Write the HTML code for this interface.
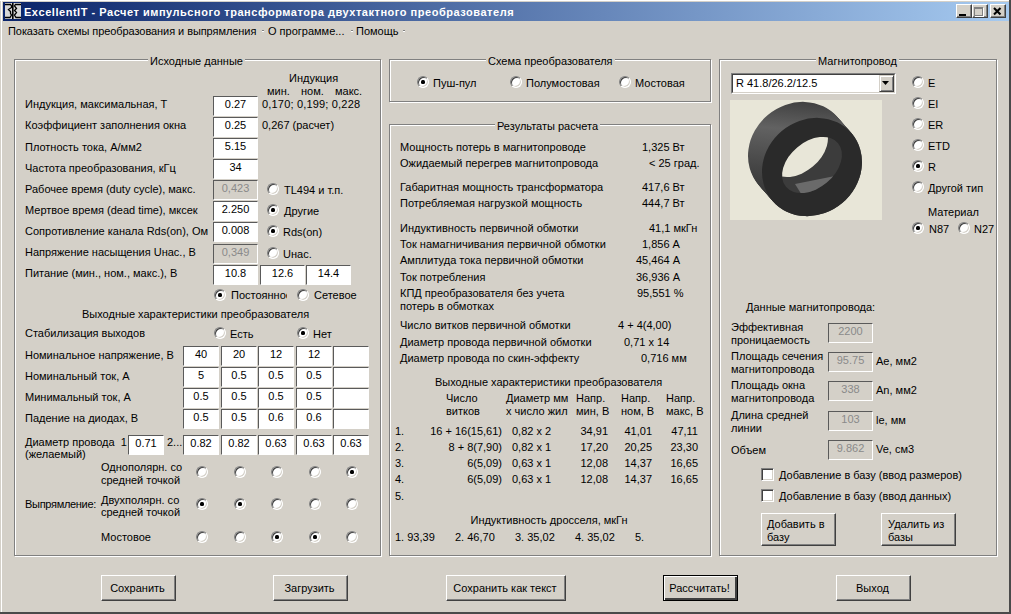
<!DOCTYPE html>
<html><head><meta charset="utf-8"><style>
html,body{margin:0;padding:0;width:1011px;height:614px;overflow:hidden;background:#d4d0c8;position:relative}
body{font-family:"Liberation Sans",sans-serif;font-size:11px;color:#000}
.t{position:absolute;white-space:pre;font-size:11px;line-height:13px}
#frame{position:absolute;left:0;top:0;width:1011px;height:614px}
#title{position:absolute;left:3px;top:2px;width:1006px;height:19px;background:linear-gradient(to right,#0a246a,#a6caf0)}
.icon{position:absolute;left:5px;top:3px}
.ttl{color:#fff;font-weight:bold;font-size:11px;letter-spacing:0.53px}
.cap{position:absolute;width:14px;height:12px;background:#d4d0c8;border-top:1px solid #fff;border-left:1px solid #fff;border-right:1px solid #404040;border-bottom:1px solid #404040;box-shadow:inset -1px -1px #808080}
.cap .mn{position:absolute;left:2px;top:9px;width:7px;height:2px;background:#000}
.cap .mx{position:absolute;left:1px;top:2px;width:7px;height:6px;border:1px solid #808080;border-top-width:2px;box-shadow:1px 1px #fff}
.sep{color:#808080}
.gd{position:absolute;border:1px solid #808080}
.gw{position:absolute;border:1px solid #fff}
.gt{background:#d4d0c8;padding:0 2px}
.box{position:absolute;box-sizing:border-box;background:#fff;padding-top:1px;border-top:1px solid #5a5a5a;border-left:1px solid #5a5a5a;border-right:1px solid #fff;border-bottom:1px solid #fff;font-size:11px;white-space:pre}
.box.dis{background:#d4d0c8;color:#8a8a8a}
.rd{position:absolute;box-sizing:border-box;width:12px;height:12px;border-radius:50%;background:#fff;border:1px solid;border-color:#808080 #fff #fff #808080;box-shadow:inset 1px 1px #404040,inset -1px -1px #d4d0c8}
.rd i{position:absolute;left:3px;top:3px;width:4px;height:4px;background:#000;border-radius:1.5px}
.cb{position:absolute;box-sizing:border-box;width:13px;height:13px;background:#fff;border:1px solid;border-color:#808080 #fff #fff #808080;box-shadow:inset 1px 1px #404040,inset -1px -1px #d4d0c8}
.btn{position:absolute;box-sizing:border-box;background:#d4d0c8;border-top:1px solid #fff;border-left:1px solid #fff;border-right:1px solid #404040;border-bottom:1px solid #404040;box-shadow:inset -1px -1px #808080}
.btn.def{border:1px solid #000;box-shadow:inset 1px 1px #fff,inset -2px -2px #404040}
.combo{position:absolute;box-sizing:border-box;background:#fff;border-top:1px solid #808080;border-left:1px solid #808080;border-right:1px solid #fff;border-bottom:1px solid #fff}
.ci{position:absolute;left:0;top:0;right:0;bottom:0;border-top:1px solid #404040;border-left:1px solid #404040;border-right:1px solid #d4d0c8;border-bottom:1px solid #d4d0c8}
.ct{position:absolute;left:3px;top:2px;line-height:13px;white-space:pre}
.cbtn{position:absolute;right:0px;top:0px;width:13px;height:15px;background:#d4d0c8;border-top:1px solid #d4d0c8;border-left:1px solid #d4d0c8;border-right:1px solid #404040;border-bottom:1px solid #404040;box-shadow:inset 1px 1px #fff,inset -1px -1px #808080}
.img{position:absolute}
#rb{position:absolute;left:1009px;top:0;width:2px;height:614px;background:#4a4a4a}
#bb{position:absolute;left:0;top:612px;width:1011px;height:2px;background:#4a4a4a}
#lb{position:absolute;left:1px;top:0;width:1px;height:612px;background:#fff}
#tb{position:absolute;left:0;top:0;width:1009px;height:1px;background:#fff}
</style></head><body>
<div id="lb"></div><div id="tb"></div><div id="rb"></div><div id="bb"></div>
<div id="title"></div>
<svg class="icon" width="16" height="16" viewBox="0 0 16 16"><rect width="16" height="16" fill="#d8d8d8"/><g fill="none" stroke="#000" stroke-width="1.3"><path d="M0 1.5H5.5L6.5 3V4.5L3.5 6.5L5.5 8.5V10.5L6.5 12L5 14.5H0"/><path d="M16 1.5H10.5L9.5 3L11.5 5.5L9.5 7.5L11.5 9.5L9.5 12L11 14.5H16"/></g><rect x="7" y="0" width="1.6" height="16" fill="#000"/></svg>
<div class="t ttl" style="left:24px;top:6px">ExcellentIT - Расчет импульсного трансформатора двухтактного преобразователя</div>
<div class="cap" style="left:956px;top:4px"><i class="mn"></i></div>
<div class="cap" style="left:972px;top:4px"><i class="mx"></i></div>
<div class="cap" style="left:990px;top:4px"><svg width="16" height="14" style="position:absolute;left:-1px;top:-1px"><path d="M4 4 L10.5 10.5 M10.5 4 L4 10.5" stroke="#000" stroke-width="2.1"/></svg></div>
<div class="t " style="left:8px;top:25px;letter-spacing:-0.07px">Показать схемы преобразования и выпрямления</div>
<div style="position:absolute;left:262px;top:30px;width:2px;height:1px;background:#808080;box-shadow:0 1px #fff"></div>
<div style="position:absolute;left:351px;top:30px;width:2px;height:1px;background:#808080;box-shadow:0 1px #fff"></div>
<div style="position:absolute;left:403px;top:30px;width:2px;height:1px;background:#808080;box-shadow:0 1px #fff"></div>
<div class="t " style="left:268px;top:25px;">О программе...</div>
<div class="t " style="left:356px;top:25px;">Помощь</div>
<div class="gw" style="left:15px;top:60px;width:365px;height:495px"></div>
<div class="gd" style="left:14px;top:59px;width:365px;height:495px"></div>
<div class="t gt" style="left:148px;top:55px">Исходные данные</div>
<div class="t " style="left:289px;top:72px;">Индукция</div>
<div class="t " style="left:267px;top:85px;">мин.</div>
<div class="t " style="left:301px;top:85px;">ном.</div>
<div class="t " style="left:335px;top:85px;">макс.</div>
<div class="t " style="left:25px;top:98px;">Индукция, максимальная, Т</div>
<div class="box" style="left:213px;top:96px;width:45px;height:20px;line-height:13px;text-align:center">0.27</div>
<div class="t " style="left:25px;top:119px;">Коэффициент заполнения окна</div>
<div class="box" style="left:213px;top:117px;width:45px;height:20px;line-height:13px;text-align:center">0.25</div>
<div class="t " style="left:25px;top:141px;">Плотность тока, А/мм2</div>
<div class="box" style="left:213px;top:138px;width:45px;height:20px;line-height:13px;text-align:center">5.15</div>
<div class="t " style="left:25px;top:162px;">Частота преобразования, кГц</div>
<div class="box" style="left:213px;top:159px;width:45px;height:20px;line-height:13px;text-align:center">34</div>
<div class="t " style="left:25px;top:183px;">Рабочее время (duty cycle), макс.</div>
<div class="box dis" style="left:213px;top:180px;width:45px;height:20px;line-height:13px;text-align:center">0,423</div>
<div class="t " style="left:25px;top:204px;">Мертвое время (dead time), мксек</div>
<div class="box" style="left:213px;top:201px;width:45px;height:20px;line-height:13px;text-align:center">2.250</div>
<div class="t " style="left:25px;top:225px;">Сопротивление канала Rds(on), Ом</div>
<div class="box" style="left:213px;top:222px;width:45px;height:20px;line-height:13px;text-align:center">0.008</div>
<div class="t " style="left:25px;top:246px;">Напряжение насыщения Uнас., В</div>
<div class="box dis" style="left:213px;top:244px;width:45px;height:20px;line-height:13px;text-align:center">0,349</div>
<div class="t " style="left:25px;top:267px;">Питание (мин., ном., макс.), В</div>
<div class="box" style="left:213px;top:265px;width:45px;height:20px;line-height:13px;text-align:center">10.8</div>
<div class="box" style="left:260px;top:265px;width:45px;height:20px;line-height:13px;text-align:center">12.6</div>
<div class="box" style="left:306px;top:265px;width:45px;height:20px;line-height:13px;text-align:center">14.4</div>
<div class="t " style="left:262px;top:98px;letter-spacing:0.18px">0,170; 0,199; 0,228</div>
<div class="t " style="left:262px;top:119px;">0,267 (расчет)</div>
<div class="rd" style="left:267px;top:183px"></div>
<div class="t " style="left:284px;top:184px;">TL494 и т.п.</div>
<div class="rd" style="left:267px;top:204px"><i></i></div>
<div class="t " style="left:284px;top:205px;">Другие</div>
<div class="rd" style="left:267px;top:225px"><i></i></div>
<div class="t " style="left:283px;top:226px;">Rds(on)</div>
<div class="rd" style="left:267px;top:247px"></div>
<div class="t " style="left:283px;top:248px;">Uнас.</div>
<div class="rd" style="left:214px;top:289px"><i></i></div>
<div class="t" style="left:231px;top:289px;width:56px;overflow:hidden">Постоянное</div>
<div class="rd" style="left:297px;top:289px"></div>
<div class="t " style="left:314px;top:289px;">Сетевое</div>
<div class="t " style="left:82px;top:308px;">Выходные характеристики преобразователя</div>
<div class="t " style="left:25px;top:327px;">Стабилизация выходов</div>
<div class="rd" style="left:214px;top:327px"></div>
<div class="t " style="left:230px;top:328px;">Есть</div>
<div class="rd" style="left:297px;top:327px"><i></i></div>
<div class="t " style="left:313px;top:328px;">Нет</div>
<div class="t " style="left:25px;top:349px;">Номинальное напряжение, В</div>
<div class="box" style="left:183px;top:346px;width:36px;height:20px;line-height:13px;text-align:center">40</div>
<div class="box" style="left:221px;top:346px;width:36px;height:20px;line-height:13px;text-align:center">20</div>
<div class="box" style="left:258px;top:346px;width:36px;height:20px;line-height:13px;text-align:center">12</div>
<div class="box" style="left:296px;top:346px;width:36px;height:20px;line-height:13px;text-align:center">12</div>
<div class="box" style="left:333px;top:346px;width:36px;height:20px;line-height:13px;text-align:center"></div>
<div class="t " style="left:25px;top:370px;">Номинальный ток, А</div>
<div class="box" style="left:183px;top:367px;width:36px;height:20px;line-height:13px;text-align:center">5</div>
<div class="box" style="left:221px;top:367px;width:36px;height:20px;line-height:13px;text-align:center">0.5</div>
<div class="box" style="left:258px;top:367px;width:36px;height:20px;line-height:13px;text-align:center">0.5</div>
<div class="box" style="left:296px;top:367px;width:36px;height:20px;line-height:13px;text-align:center">0.5</div>
<div class="box" style="left:333px;top:367px;width:36px;height:20px;line-height:13px;text-align:center"></div>
<div class="t " style="left:25px;top:391px;">Минимальный ток, А</div>
<div class="box" style="left:183px;top:388px;width:36px;height:20px;line-height:13px;text-align:center">0.5</div>
<div class="box" style="left:221px;top:388px;width:36px;height:20px;line-height:13px;text-align:center">0.5</div>
<div class="box" style="left:258px;top:388px;width:36px;height:20px;line-height:13px;text-align:center">0.5</div>
<div class="box" style="left:296px;top:388px;width:36px;height:20px;line-height:13px;text-align:center">0.5</div>
<div class="box" style="left:333px;top:388px;width:36px;height:20px;line-height:13px;text-align:center"></div>
<div class="t " style="left:25px;top:412px;">Падение на диодах, В</div>
<div class="box" style="left:183px;top:409px;width:36px;height:20px;line-height:13px;text-align:center">0.5</div>
<div class="box" style="left:221px;top:409px;width:36px;height:20px;line-height:13px;text-align:center">0.5</div>
<div class="box" style="left:258px;top:409px;width:36px;height:20px;line-height:13px;text-align:center">0.6</div>
<div class="box" style="left:296px;top:409px;width:36px;height:20px;line-height:13px;text-align:center">0.6</div>
<div class="box" style="left:333px;top:409px;width:36px;height:20px;line-height:13px;text-align:center"></div>
<div class="t " style="left:25px;top:436px;">Диаметр провода&nbsp; 1</div>
<div class="t " style="left:25px;top:448px;">(желаемый)</div>
<div class="box" style="left:128px;top:435px;width:36px;height:20px;line-height:13px;text-align:center">0.71</div>
<div class="t " style="left:167px;top:436px;">2...</div>
<div class="box" style="left:183px;top:435px;width:36px;height:20px;line-height:13px;text-align:center">0.82</div>
<div class="box" style="left:221px;top:435px;width:36px;height:20px;line-height:13px;text-align:center">0.82</div>
<div class="box" style="left:258px;top:435px;width:36px;height:20px;line-height:13px;text-align:center">0.63</div>
<div class="box" style="left:296px;top:435px;width:36px;height:20px;line-height:13px;text-align:center">0.63</div>
<div class="box" style="left:333px;top:435px;width:36px;height:20px;line-height:13px;text-align:center">0.63</div>
<div class="t " style="left:101px;top:461px;">Однополярн. со</div>
<div class="t " style="left:101px;top:474px;">средней точкой</div>
<div class="t " style="left:101px;top:494px;">Двухполярн. со</div>
<div class="t " style="left:101px;top:506px;">средней точкой</div>
<div class="t " style="left:25px;top:498px;letter-spacing:-0.3px">Выпрямление:</div>
<div class="t " style="left:101px;top:531px;">Мостовое</div>
<div class="rd" style="left:196px;top:466px"></div>
<div class="rd" style="left:234px;top:466px"></div>
<div class="rd" style="left:271px;top:466px"></div>
<div class="rd" style="left:309px;top:466px"></div>
<div class="rd" style="left:346px;top:466px"><i></i></div>
<div class="rd" style="left:196px;top:498px"><i></i></div>
<div class="rd" style="left:234px;top:498px"><i></i></div>
<div class="rd" style="left:271px;top:498px"></div>
<div class="rd" style="left:309px;top:498px"></div>
<div class="rd" style="left:346px;top:498px"></div>
<div class="rd" style="left:196px;top:531px"></div>
<div class="rd" style="left:234px;top:531px"></div>
<div class="rd" style="left:271px;top:531px"><i></i></div>
<div class="rd" style="left:309px;top:531px"><i></i></div>
<div class="rd" style="left:346px;top:531px"></div>
<div class="gw" style="left:390px;top:60px;width:320px;height:41px"></div>
<div class="gd" style="left:389px;top:59px;width:320px;height:41px"></div>
<div class="t gt" style="left:486px;top:55px">Схема преобразователя</div>
<div class="rd" style="left:417px;top:76px"><i></i></div>
<div class="t " style="left:433px;top:77px;">Пуш-пул</div>
<div class="rd" style="left:510px;top:76px"></div>
<div class="t " style="left:526px;top:77px;">Полумостовая</div>
<div class="rd" style="left:619px;top:76px"></div>
<div class="t " style="left:635px;top:77px;">Мостовая</div>
<div class="gw" style="left:390px;top:125px;width:320px;height:430px"></div>
<div class="gd" style="left:389px;top:124px;width:320px;height:430px"></div>
<div class="t gt" style="left:495px;top:120px">Результаты расчета</div>
<div class="t " style="left:400px;top:141px;">Мощность потерь в магнитопроводе</div>
<div class="t " style="left:642px;top:141px;">1,325 Вт</div>
<div class="t " style="left:400px;top:157px;">Ожидаемый перегрев магнитопровода</div>
<div class="t " style="left:649px;top:157px;">&lt; 25 град.</div>
<div class="t " style="left:400px;top:181px;">Габаритная мощность трансформатора</div>
<div class="t " style="left:642px;top:181px;">417,6 Вт</div>
<div class="t " style="left:400px;top:197px;">Потребляемая нагрузкой мощность</div>
<div class="t " style="left:642px;top:197px;">444,7 Вт</div>
<div class="t " style="left:400px;top:222px;">Индуктивность первичной обмотки</div>
<div class="t " style="left:649px;top:222px;">41,1 мкГн</div>
<div class="t " style="left:400px;top:238px;">Ток намагничивания первичной обмотки</div>
<div class="t " style="left:642px;top:238px;">1,856 А</div>
<div class="t " style="left:400px;top:254px;">Амплитуда тока первичной обмотки</div>
<div class="t " style="left:636px;top:254px;">45,464 А</div>
<div class="t " style="left:400px;top:271px;">Ток потребления</div>
<div class="t " style="left:636px;top:271px;">36,936 А</div>
<div class="t " style="left:400px;top:287px;">КПД преобразователя без учета</div>
<div class="t " style="left:637px;top:287px;">95,551 %</div>
<div class="t " style="left:400px;top:319px;">Число витков первичной обмотки</div>
<div class="t " style="left:618px;top:319px;">4 + 4(4,00)</div>
<div class="t " style="left:400px;top:336px;">Диаметр провода первичной обмотки</div>
<div class="t " style="left:624px;top:336px;">0,71 x 14</div>
<div class="t " style="left:400px;top:352px;">Диаметр провода по скин-эффекту</div>
<div class="t " style="left:641px;top:352px;">0,716 мм</div>
<div class="t " style="left:400px;top:300px;">потерь в обмотках</div>
<div class="t " style="left:435px;top:376px;">Выходные характеристики преобразователя</div>
<div class="t " style="left:446px;top:392px;">Число</div>
<div class="t " style="left:446px;top:405px;">витков</div>
<div class="t " style="left:506px;top:392px;">Диаметр мм</div>
<div class="t " style="left:506px;top:405px;">х число жил</div>
<div class="t " style="left:576px;top:392px;">Напр.</div>
<div class="t " style="left:576px;top:405px;">мин, В</div>
<div class="t " style="left:621px;top:392px;">Напр.</div>
<div class="t " style="left:621px;top:405px;">ном, В</div>
<div class="t " style="left:666px;top:392px;">Напр.</div>
<div class="t " style="left:666px;top:405px;">макс, В</div>
<div class="t " style="left:395px;top:425px;">1.</div>
<div class="t " style="left:302px;width:200px;text-align:right;top:425px;">16 + 16(15,61)</div>
<div class="t " style="left:512px;top:425px;">0,82 x 2</div>
<div class="t " style="left:408px;width:200px;text-align:right;top:425px;">34,91</div>
<div class="t " style="left:452px;width:200px;text-align:right;top:425px;">41,01</div>
<div class="t " style="left:498px;width:200px;text-align:right;top:425px;">47,11</div>
<div class="t " style="left:395px;top:441px;">2.</div>
<div class="t " style="left:302px;width:200px;text-align:right;top:441px;">8 + 8(7,90)</div>
<div class="t " style="left:512px;top:441px;">0,82 x 1</div>
<div class="t " style="left:408px;width:200px;text-align:right;top:441px;">17,20</div>
<div class="t " style="left:452px;width:200px;text-align:right;top:441px;">20,25</div>
<div class="t " style="left:498px;width:200px;text-align:right;top:441px;">23,30</div>
<div class="t " style="left:395px;top:457px;">3.</div>
<div class="t " style="left:302px;width:200px;text-align:right;top:457px;">6(5,09)</div>
<div class="t " style="left:512px;top:457px;">0,63 x 1</div>
<div class="t " style="left:408px;width:200px;text-align:right;top:457px;">12,08</div>
<div class="t " style="left:452px;width:200px;text-align:right;top:457px;">14,37</div>
<div class="t " style="left:498px;width:200px;text-align:right;top:457px;">16,65</div>
<div class="t " style="left:395px;top:473px;">4.</div>
<div class="t " style="left:302px;width:200px;text-align:right;top:473px;">6(5,09)</div>
<div class="t " style="left:512px;top:473px;">0,63 x 1</div>
<div class="t " style="left:408px;width:200px;text-align:right;top:473px;">12,08</div>
<div class="t " style="left:452px;width:200px;text-align:right;top:473px;">14,37</div>
<div class="t " style="left:498px;width:200px;text-align:right;top:473px;">16,65</div>
<div class="t " style="left:395px;top:490px;">5.</div>
<div class="t " style="left:449px;width:200px;text-align:center;top:514px;">Индуктивность дросселя, мкГн</div>
<div class="t " style="left:395px;top:531px;">1. 93,39</div>
<div class="t " style="left:455px;top:531px;">2. 46,70</div>
<div class="t " style="left:515px;top:531px;">3. 35,02</div>
<div class="t " style="left:575px;top:531px;">4. 35,02</div>
<div class="t " style="left:635px;top:531px;">5.</div>
<div class="gw" style="left:720px;top:60px;width:276px;height:495px"></div>
<div class="gd" style="left:719px;top:59px;width:276px;height:495px"></div>
<div class="t gt" style="left:816px;top:55px">Магнитопровод</div>
<div class="combo" style="left:731px;top:73px;width:165px;height:21px"><div class="ci"><div class="ct">R 41.8/26.2/12.5</div><div class="cbtn"><svg width="7" height="4" style="position:absolute;left:2px;top:5px"><path d="M0 0H7L3.5 4Z" fill="#000"/></svg></div></div></div>
<svg class="img" style="left:730px;top:100px" width="152" height="120" viewBox="730 100 152 120">
<defs>
<linearGradient id="wall" gradientUnits="userSpaceOnUse" x1="755" y1="190" x2="845" y2="100"><stop offset="0" stop-color="#303030"/><stop offset="0.3" stop-color="#454545"/><stop offset="0.62" stop-color="#626262"/><stop offset="0.85" stop-color="#404040"/><stop offset="1" stop-color="#2c2c2c"/></linearGradient>
<clipPath id="hole"><ellipse cx="812" cy="165" rx="34" ry="23" transform="rotate(-40 812 165)"/></clipPath>
</defs>
<rect x="730" y="100" width="152" height="120" fill="#e8e6d8"/>
<ellipse cx="812.00" cy="167.00" rx="52" ry="47" transform="rotate(-40 812.00 167.00)" fill="url(#wall)"/><ellipse cx="810.83" cy="165.67" rx="52" ry="47" transform="rotate(-40 810.83 165.67)" fill="url(#wall)"/><ellipse cx="809.67" cy="164.33" rx="52" ry="47" transform="rotate(-40 809.67 164.33)" fill="url(#wall)"/><ellipse cx="808.50" cy="163.00" rx="52" ry="47" transform="rotate(-40 808.50 163.00)" fill="url(#wall)"/><ellipse cx="807.33" cy="161.67" rx="52" ry="47" transform="rotate(-40 807.33 161.67)" fill="url(#wall)"/><ellipse cx="806.17" cy="160.33" rx="52" ry="47" transform="rotate(-40 806.17 160.33)" fill="url(#wall)"/><ellipse cx="805.00" cy="159.00" rx="52" ry="47" transform="rotate(-40 805.00 159.00)" fill="url(#wall)"/><ellipse cx="803.83" cy="157.67" rx="52" ry="47" transform="rotate(-40 803.83 157.67)" fill="url(#wall)"/><ellipse cx="802.67" cy="156.33" rx="52" ry="47" transform="rotate(-40 802.67 156.33)" fill="url(#wall)"/><ellipse cx="801.50" cy="155.00" rx="52" ry="47" transform="rotate(-40 801.50 155.00)" fill="url(#wall)"/><ellipse cx="800.33" cy="153.67" rx="52" ry="47" transform="rotate(-40 800.33 153.67)" fill="url(#wall)"/><ellipse cx="799.17" cy="152.33" rx="52" ry="47" transform="rotate(-40 799.17 152.33)" fill="url(#wall)"/><ellipse cx="798.00" cy="151.00" rx="52" ry="47" transform="rotate(-40 798.00 151.00)" fill="url(#wall)"/>
<ellipse cx="812" cy="167" rx="52" ry="47" transform="rotate(-40 812 167)" fill="#2a2a2a"/>
<ellipse cx="812" cy="165" rx="34" ry="23" transform="rotate(-40 812 165)" fill="#3c3c3c"/>
<g clip-path="url(#hole)"><ellipse cx="798" cy="149" rx="34" ry="23" transform="rotate(-40 798 149)" fill="#e8e6d8"/>
<path d="M795 184 L835 176 L848 186 L805 200Z" fill="#6a6a6a"/></g>
</svg>
<div class="rd" style="left:912px;top:76px"></div>
<div class="t " style="left:928px;top:77px;">E</div>
<div class="rd" style="left:912px;top:97px"></div>
<div class="t " style="left:928px;top:98px;">EI</div>
<div class="rd" style="left:912px;top:118px"></div>
<div class="t " style="left:928px;top:119px;">ER</div>
<div class="rd" style="left:912px;top:139px"></div>
<div class="t " style="left:928px;top:140px;">ETD</div>
<div class="rd" style="left:912px;top:160px"><i></i></div>
<div class="t " style="left:928px;top:161px;">R</div>
<div class="rd" style="left:912px;top:181px"></div>
<div class="t " style="left:928px;top:182px;">Другой тип</div>
<div class="t " style="left:928px;top:206px;">Материал</div>
<div class="rd" style="left:912px;top:222px"><i></i></div>
<div class="t " style="left:929px;top:223px;">N87</div>
<div class="rd" style="left:958px;top:222px"></div>
<div class="t " style="left:974px;top:223px;">N27</div>
<div class="t " style="left:746px;top:301px;">Данные магнитопровода:</div>
<div class="box dis" style="left:828px;top:323px;width:45px;height:20px;line-height:13px;text-align:center">2200</div>
<div class="t " style="left:731px;top:321px;">Эффективная</div>
<div class="t " style="left:731px;top:334px;">проницаемость</div>
<div class="box dis" style="left:828px;top:352px;width:45px;height:20px;line-height:13px;text-align:center">95.75</div>
<div class="t " style="left:731px;top:350px;">Площадь сечения</div>
<div class="t " style="left:731px;top:363px;">магнитопровода</div>
<div class="t " style="left:876px;top:355px;">Ae, мм2</div>
<div class="box dis" style="left:828px;top:381px;width:45px;height:20px;line-height:13px;text-align:center">338</div>
<div class="t " style="left:731px;top:379px;">Площадь окна</div>
<div class="t " style="left:731px;top:392px;">магнитопровода</div>
<div class="t " style="left:876px;top:384px;">An, мм2</div>
<div class="box dis" style="left:828px;top:411px;width:45px;height:20px;line-height:13px;text-align:center">103</div>
<div class="t " style="left:731px;top:409px;">Длина средней</div>
<div class="t " style="left:731px;top:422px;">линии</div>
<div class="t " style="left:876px;top:414px;">le, мм</div>
<div class="box dis" style="left:828px;top:440px;width:45px;height:20px;line-height:13px;text-align:center">9.862</div>
<div class="t " style="left:876px;top:443px;">Ve, см3</div>
<div class="t " style="left:731px;top:444px;">Объем</div>
<div class="cb" style="left:761px;top:468px"></div>
<div class="t " style="left:779px;top:469px;">Добавление в базу (ввод размеров)</div>
<div class="cb" style="left:761px;top:489px"></div>
<div class="t " style="left:779px;top:490px;">Добавление в базу (ввод данных)</div>
<div class="btn" style="left:761px;top:513px;width:75px;height:33px"></div>
<div class="t " style="left:767px;top:518px;">Добавить в</div>
<div class="t " style="left:767px;top:531px;">базу</div>
<div class="btn" style="left:881px;top:513px;width:75px;height:33px"></div>
<div class="t " style="left:888px;top:518px;">Удалить из</div>
<div class="t " style="left:888px;top:531px;">базы</div>
<div class="btn" style="left:101px;top:575px;width:75px;height:26px"></div>
<div class="t " style="left:37.5px;width:200px;text-align:center;top:582px;">Сохранить</div>
<div class="btn" style="left:273px;top:575px;width:75px;height:26px"></div>
<div class="t " style="left:209.5px;width:200px;text-align:center;top:582px;">Загрузить</div>
<div class="btn" style="left:446px;top:575px;width:120px;height:26px"></div>
<div class="t " style="left:405.0px;width:200px;text-align:center;top:582px;">Сохранить как текст</div>
<div class="btn def" style="left:663px;top:575px;width:75px;height:26px"></div>
<div class="t " style="left:599.5px;width:200px;text-align:center;top:582px;">Рассчитать!</div>
<div class="btn" style="left:836px;top:575px;width:75px;height:26px"></div>
<div class="t " style="left:772.5px;width:200px;text-align:center;top:582px;">Выход</div>
</body></html>
